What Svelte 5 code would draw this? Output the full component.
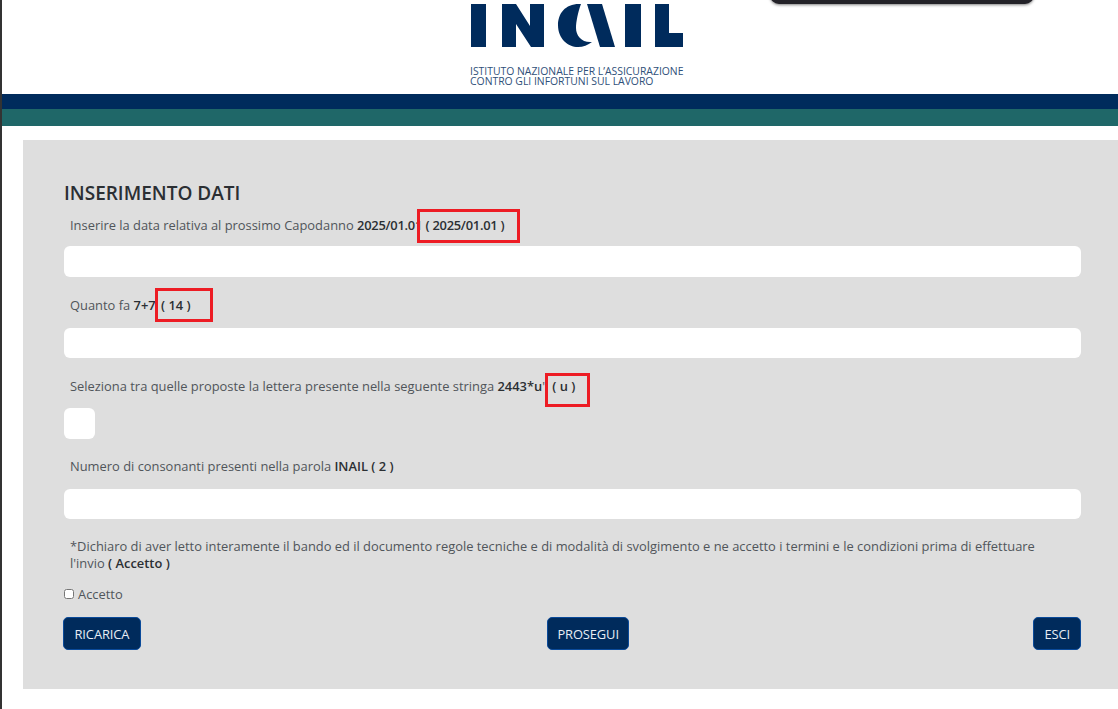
<script>
  const fields = [
    { label: "Quanto fa ", bold: "7+7", answer: "( 14 )", cls: "second" },
  ];
</script>

<div class="page">
  <header class="top">
    <div class="brand">
      <svg class="logo" viewBox="0 0 214 48" width="214" height="48" aria-label="INAIL">
        <rect x="1" y="4" width="15" height="43" />
        <path d="M32 4h14l14 22V4h14v43H61L46 24v23H32z" />
        <path d="M111 4C96 3 88 13 88 25c0 14 10 22 20 22 5 0 10-2 14-5-10 1-16-6-16-14 0-6 2-16 5-24z" />
        <path d="M117 4h15l13 43h-15z" />
        <rect x="155" y="4" width="16" height="43" />
        <path d="M185 4h14v29h14v14h-28z" />
      </svg>
      <div class="tagline">ISTITUTO NAZIONALE PER L’ASSICURAZIONE<br />CONTRO GLI INFORTUNI SUL LAVORO</div>
    </div>
    <div class="floating"></div>
  </header>
  <div class="band navy"></div>
  <div class="band teal"></div>

  <main class="card">
    <h1>INSERIMENTO DATI</h1>

    <div class="field first">
      <p class="question">Inserire la data relativa al prossimo Capodanno <b class="tight">2025/01.01</b> <span class="marked"><b class="tight">( 2025/01.01 )</b><i class="box b1"></i></span></p>
      <div class="input"></div>
    </div>

    {#each fields as f}
      <div class="field {f.cls}">
        <p class="question">{f.label}<b>{f.bold}</b> <span class="marked m2"><b>{f.answer}</b><i class="box b2"></i></span></p>
        <div class="input"></div>
      </div>
    {/each}

    <div class="field third">
      <p class="question">Seleziona tra quelle proposte la lettera presente nella seguente stringa <b>2443*u</b>' <span class="marked m3"><b>( u )</b><i class="box b3"></i></span></p>
      <div class="input small"></div>
    </div>

    <div class="field fourth">
      <p class="question">Numero di consonanti presenti nella parola <b>INAIL ( 2 )</b></p>
      <div class="input"></div>
    </div>

    <p class="question terms">*Dichiaro di aver letto interamente il bando ed il documento regole tecniche e di modalità di svolgimento e ne accetto i termini e le condizioni prima di effettuare l'invio <b>( Accetto )</b></p>

    <label class="accept"><input type="checkbox" /> Accetto</label>

    <div class="actions">
      <button class="reload">RICARICA</button>
      <button class="next">PROSEGUI</button>
      <button>ESCI</button>
    </div>
  </main>
</div>

<style>
  :global(body) {
    margin: 0;
    background: #fff;
    font-family: "Open Sans", "Noto Sans", sans-serif;
  }

  .page {
    height: 709px;
    box-sizing: border-box;
    border-left: 2px solid #333;
    overflow: hidden;
  }

  .top {
    height: 94px;
    box-sizing: border-box;
    padding-left: 468px;
    position: relative;
  }

  .logo {
    display: block;
    fill: #002b5c;
  }

  .tagline {
    margin-top: 19px;
    font-size: 10.4px;
    line-height: 9.5px;
    color: #2f5079;
    white-space: nowrap;
  }

  .floating {
    position: absolute;
    left: 768px;
    top: -20px;
    width: 264px;
    height: 24px;
    background: #232228;
    border-radius: 0 0 9px 9px;
    box-shadow: 0 1px 3px rgba(0, 0, 0, 0.5);
  }

  .band { height: 15px; }
  .navy { background: #002b5c; }
  .teal { background: #1f6768; height: 17px; }

  .card {
    margin: 14px 0 0 21px;
    height: 549px;
    box-sizing: border-box;
    padding: 40px 37px 0 41px;
    background: #dedede;
  }

  h1 {
    margin: 0 0 9px;
    font-size: 19px;
    font-weight: 600;
    line-height: 26px;
    color: #2b2f33;
  }

  .question {
    margin: 0;
    padding-left: 6px;
    font-size: 12.9px;
    line-height: 20px;
    color: #50555a;
  }

  .question b {
    font-weight: 600;
    color: #2b2f33;
  }

  .question b.tight { letter-spacing: -0.25px; }

  .input {
    height: 31px;
    margin-top: 11px;
    background: #fff;
    border-radius: 6px;
  }

  .input.small { width: 31px; margin-top: 12px; }

  .second, .third { margin-top: 18px; }
  .second .input, .fourth .input { height: 30px; margin-top: 13px; }
  .fourth { margin-top: 17px; }

  .terms {
    margin-top: 19px;
    padding-right: 30px;
    line-height: 17px;
  }

  .marked { position: relative; }
  .m2 { margin-left: 2px; }
  .m3 { margin-left: 4px; }

  .box {
    position: absolute;
    top: -8px;
    bottom: -8px;
    border: 3px solid #ed1c24;
  }

  .b1 { left: -8px; right: -16px; top: -7px; bottom: -9px; }
  .b2 { left: -6px; right: -22px; }
  .b3 { left: -7px; right: -15px; top: -4px; bottom: -12px; }

  .accept {
    display: flex;
    align-items: center;
    gap: 4px;
    margin-top: 12px;
    font-size: 12.9px;
    line-height: 20px;
    color: #50555a;
  }

  .accept input {
    width: 10px;
    height: 10px;
    margin: 0;
  }

  .actions {
    display: flex;
    justify-content: space-between;
    margin-top: 13px;
  }

  button {
    height: 33px;
    padding: 0 10px;
    background: #002b5c;
    border: 1px solid #0a4a9a;
    border-radius: 5px;
    color: #e8eef5;
    font: 12.9px "Open Sans", sans-serif;
    letter-spacing: -0.1px;
  }

  .reload { margin-left: -1px; padding: 0 10.5px; }
  .next { padding: 0 9.5px; margin-left: 2px; }
</style>
